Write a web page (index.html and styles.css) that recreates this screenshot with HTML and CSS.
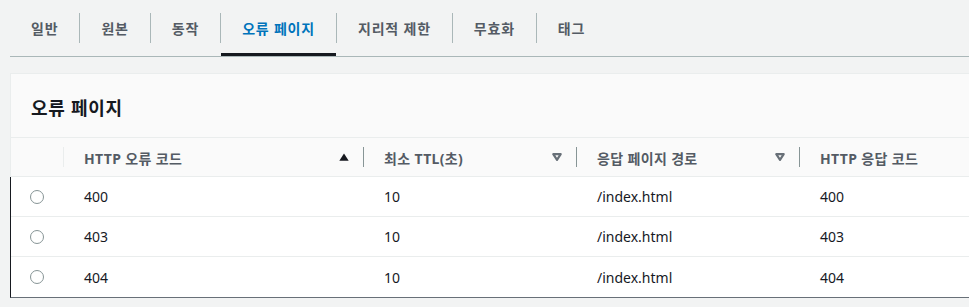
FILE: index.html
```html
<!DOCTYPE html>
<html lang="ko">
<head>
<meta charset="utf-8">
<title>오류 페이지</title>
<link rel="stylesheet" href="styles.css">
</head>
<body>
<nav class="tabs">
  <a class="tab">일반</a>
  <span class="tab-sep"></span>
  <a class="tab">원본</a>
  <span class="tab-sep"></span>
  <a class="tab">동작</a>
  <span class="tab-sep"></span>
  <a class="tab active">오류 페이지</a>
  <span class="tab-sep"></span>
  <a class="tab">지리적 제한</a>
  <span class="tab-sep"></span>
  <a class="tab">무효화</a>
  <span class="tab-sep"></span>
  <a class="tab">태그</a>
</nav>

<section class="card">
  <header class="card-header">
    <h2 class="card-title">오류 페이지</h2>
  </header>
  <div class="table">
    <div class="row head">
      <div class="th th-select"></div>
      <div class="th th-first"><span class="th-label">HTTP 오류 코드</span>
        <svg class="sort" width="10" height="8" viewBox="0 0 10 8"><path d="M0.3 7.7 L5 0.4 L9.7 7.7 Z" fill="#16191f"/></svg>
      </div>
      <div class="th"><span class="th-label">최소 TTL(초)</span>
        <svg class="sort" width="10" height="8" viewBox="0 0 10 8"><path d="M1.3 1.2 H8.7 L5 6.8 Z" fill="none" stroke="#687078" stroke-width="2.2" stroke-linejoin="round"/></svg>
      </div>
      <div class="th"><span class="th-label">응답 페이지 경로</span>
        <svg class="sort" width="10" height="8" viewBox="0 0 10 8"><path d="M1.3 1.2 H8.7 L5 6.8 Z" fill="none" stroke="#687078" stroke-width="2.2" stroke-linejoin="round"/></svg>
      </div>
      <div class="th"><span class="th-label">HTTP 응답 코드</span></div>
    </div>
    <div class="body">
      <div class="row">
        <div class="td td-select"><span class="radio"></span></div>
        <div class="td">400</div>
        <div class="td">10</div>
        <div class="td">/index.html</div>
        <div class="td">400</div>
      </div>
      <div class="row">
        <div class="td td-select"><span class="radio"></span></div>
        <div class="td">403</div>
        <div class="td">10</div>
        <div class="td">/index.html</div>
        <div class="td">403</div>
      </div>
      <div class="row">
        <div class="td td-select"><span class="radio"></span></div>
        <div class="td">404</div>
        <div class="td">10</div>
        <div class="td">/index.html</div>
        <div class="td">404</div>
      </div>
    </div>
  </div>
</section>
</body>
</html>
```

FILE: styles.css
```css
* { box-sizing: border-box; }

html, body {
  margin: 0;
  padding: 0;
}

body {
  background: #f2f3f3;
  font-family: "Noto Sans", "Noto Sans CJK KR", sans-serif;
  font-size: 14px;
  color: #16191f;
  overflow: hidden;
}

.tabs {
  display: flex;
  align-items: flex-start;
  margin-left: 10px;
  border-bottom: 1px solid #aab7b8;
  height: 57px;
}

.tab {
  display: flex;
  align-items: center;
  height: 56px;
  padding: 2px 21px 0 21px;
  border-bottom: 3px solid transparent;
  color: #545b64;
  font-weight: 700;
  font-size: 14px;
  letter-spacing: 0.8px;
  white-space: nowrap;
}

.tab.active {
  color: #0073bb;
  border-bottom-color: #16191f;
}

.tab-sep {
  flex: none;
  width: 1px;
  height: 30px;
  margin-top: 13px;
  background: #aab7b8;
}

.card {
  margin: 16px -20px 0 10px;
  border-top: 1px solid #eaeded;
}

.card-header {
  background: #fafafa;
  border-left: 1px solid #eaeded;
  border-bottom: 1px solid #eaeded;
  height: 64px;
  padding: 0 20px;
  display: flex;
  align-items: center;
}

.card-title {
  margin: 0;
  font-size: 18px;
  font-weight: 700;
  letter-spacing: 0.7px;
  color: #16191f;
  padding-top: 2px;
}

.row {
  display: grid;
  grid-template-columns: 52px 300px 213px 223px 1fr;
  align-items: center;
}

.row.head {
  background: #fafafa;
  height: 39px;
  border-left: 1px solid #eaeded;
  border-bottom: 1px solid #eaeded;
}

.th {
  display: flex;
  align-items: center;
  justify-content: space-between;
  height: 20px;
  padding: 0 14px 0 20px;
  border-left: 1px solid #879596;
  color: #545b64;
  font-weight: 700;
  letter-spacing: 0.35px;
  white-space: nowrap;
}

.th-select {
  border-left: none;
}

.th-first {
  border-left-color: #eaeded;
}

.th-label {
  padding-top: 1px;
}

.sort {
  flex: none;
  display: block;
}

.body {
  background: #ffffff;
  border-left: 1px solid #16191f;
  border-bottom: 1px solid #687078;
}

.body .row {
  height: 40px;
  border-bottom: 1px solid #eaeded;
}

.body .row:last-child {
  border-bottom: none;
  height: 40px;
}

.td {
  padding-left: 21px;
  white-space: nowrap;
}

.td-select {
  padding-left: 0;
  display: flex;
  justify-content: center;
  align-items: center;
}

.radio {
  display: block;
  width: 14px;
  height: 14px;
  border: 1px solid #879596;
  border-radius: 50%;
  background: #fff;
}
```
